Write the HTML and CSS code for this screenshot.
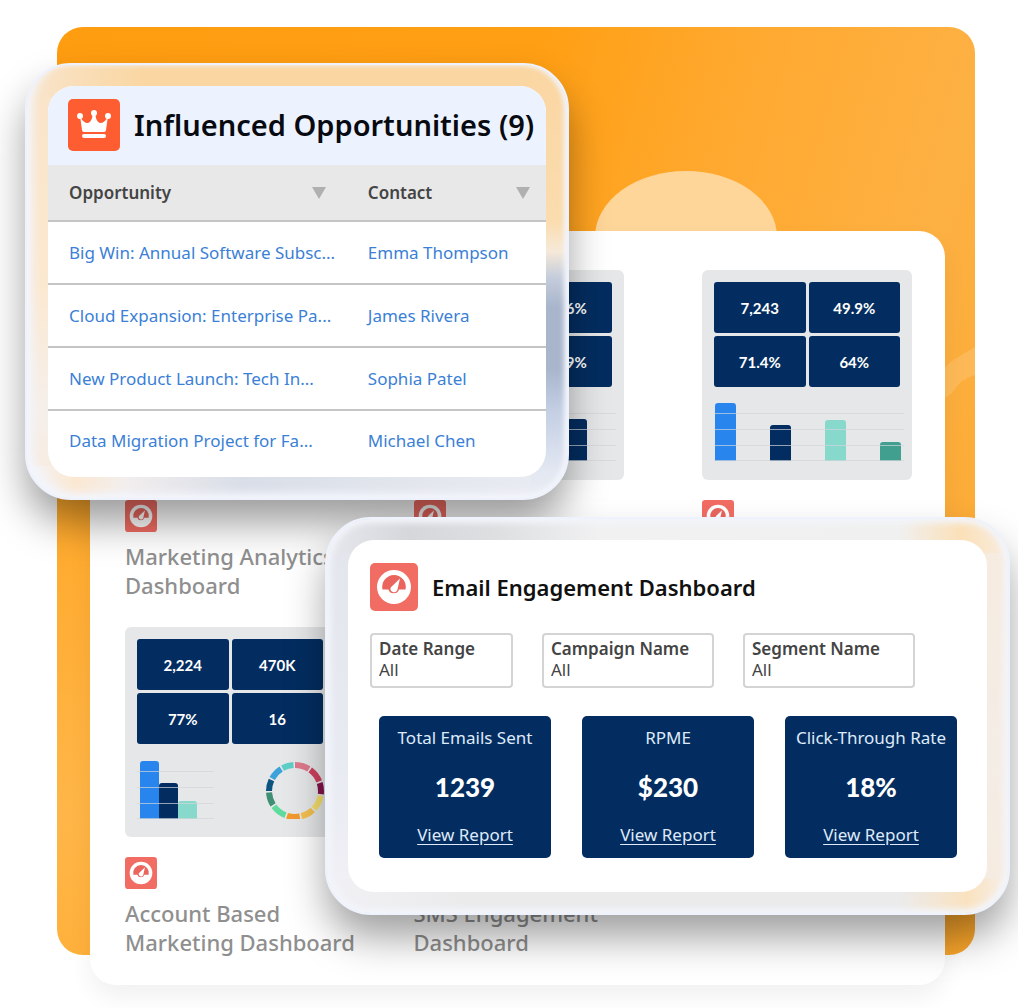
FILE: index.html
```html
<!DOCTYPE html>
<html lang="en">
<head>
  <meta charset="UTF-8">
  <meta name="viewport" content="width=device-width, initial-scale=1.0">
  <title>Marketing Dashboards</title>
  <link rel="stylesheet" href="styles.css">
</head>
<body>
  <!-- shared gauge icon -->
  <svg class="sprite" width="0" height="0" aria-hidden="true">
    <symbol id="gauge" viewBox="0 0 48 48">
      <rect width="48" height="48" rx="5" fill="#f16c63"/>
      <circle cx="24" cy="24" r="17" fill="#fff"/>
      <path d="M12.5 26.5a11.8 11.8 0 1 1 23 0h-6.500a5.500 5.500 0 0 1-10.500 0z" fill="#e9655d"/>
      <path d="M30 15.500L27.300 27.300a3.600 3.600 0 0 1-6.600-2.800z" fill="#fff"/>
    </symbol>
  </svg>

  <main class="stage">
    <div class="backdrop">
      <svg viewBox="0 0 918 928" preserveAspectRatio="none" aria-hidden="true">
        <ellipse cx="629" cy="210" rx="91" ry="66" fill="#ffd699"/>
        <path d="M880 352q8-14 18-20t20-12v28q-14 4-20 14t-18 10z" fill="#fdbb5e" opacity=".8"/>
      </svg>
    </div>

    <section class="board">
      <article class="dash">
        <div class="thumb"></div>
        <svg class="dash-icon"><use href="#gauge"/></svg>
        <h3>Marketing Analytics Dashboard</h3>
      </article>

      <article class="dash">
        <div class="thumb">
          <div class="tiles">
            <span></span><span>12.6%</span>
            <span></span><span>41.9%</span>
          </div>
          <svg class="chart" viewBox="0 0 190 60">
            <path d="M141 59V20q0-3 3-3h14q3 0 3 3v39z" fill="#032d60"/>
            <path d="M0 11.500h190M0 27.500h190M0 43.500h190M0 58.500h190" stroke="#d2d4d8" stroke-opacity=".7"/>
          </svg>
        </div>
        <svg class="dash-icon"><use href="#gauge"/></svg>
      </article>

      <article class="dash">
        <div class="thumb">
          <div class="tiles">
            <span>7,243</span><span>49.9%</span>
            <span>71.4%</span><span>64%</span>
          </div>
          <svg class="chart" viewBox="0 0 190 60">
            <path d="M1 59V4q0-3 3-3h15q3 0 3 3v55z" fill="#2985ee"/>
            <path d="M56 59V26q0-3 3-3h15q3 0 3 3v33z" fill="#032d60"/>
            <path d="M111 59V21q0-3 3-3h15q3 0 3 3v38z" fill="#86d9cb"/>
            <path d="M166 59V43q0-3 3-3h15q3 0 3 3v16z" fill="#419f8f"/>
            <path d="M0 11.500h190M0 27.500h190M0 43.500h190M0 58.500h190" stroke="#d2d4d8" stroke-opacity=".7"/>
          </svg>
        </div>
        <svg class="dash-icon"><use href="#gauge"/></svg>
      </article>

      <article class="dash">
        <div class="thumb">
          <div class="tiles">
            <span>2,224</span><span>470K</span>
            <span>77%</span><span>16</span>
          </div>
          <svg class="chart" viewBox="0 0 190 60">
            <path d="M3 60V5q0-3 3-3h13q3 0 3 3v55z" fill="#2985ee"/>
            <path d="M22 60V27q0-3 3-3h13q3 0 3 3v33z" fill="#032d60"/>
            <path d="M41 60V45q0-3 3-3h13q3 0 3 3v15z" fill="#86d9cb"/>
            <path d="M0 12.500h77M0 28.500h77M0 44.500h77M0 59.500h77" stroke="#d2d4d8" stroke-opacity=".7"/>
            <g fill="none" stroke-width="6" transform="rotate(-90 158 30)">
              <circle cx="156" cy="30" r="26" pathLength="100" stroke="#dd7a8c" stroke-dasharray="9 91"/>
              <circle cx="156" cy="30" r="26" pathLength="100" stroke="#d0405f" stroke-dasharray="9 91" stroke-dashoffset="-10"/>
              <circle cx="156" cy="30" r="26" pathLength="100" stroke="#85134a" stroke-dasharray="7 93" stroke-dashoffset="-20"/>
              <circle cx="156" cy="30" r="26" pathLength="100" stroke="#f7e06b" stroke-dasharray="9 91" stroke-dashoffset="-28"/>
              <circle cx="156" cy="30" r="26" pathLength="100" stroke="#f5c04f" stroke-dasharray="8 92" stroke-dashoffset="-38"/>
              <circle cx="156" cy="30" r="26" pathLength="100" stroke="#f3992f" stroke-dasharray="8 92" stroke-dashoffset="-47"/>
              <circle cx="156" cy="30" r="26" pathLength="100" stroke="#5fdc9d" stroke-dasharray="9 91" stroke-dashoffset="-56"/>
              <circle cx="156" cy="30" r="26" pathLength="100" stroke="#3f8f72" stroke-dasharray="8 92" stroke-dashoffset="-66"/>
              <circle cx="156" cy="30" r="26" pathLength="100" stroke="#0d5380" stroke-dasharray="7 93" stroke-dashoffset="-75"/>
              <circle cx="156" cy="30" r="26" pathLength="100" stroke="#3ba3d9" stroke-dasharray="8 92" stroke-dashoffset="-83"/>
              <circle cx="156" cy="30" r="26" pathLength="100" stroke="#5ccfc6" stroke-dasharray="7 93" stroke-dashoffset="-92"/>
            </g>
          </svg>
        </div>
        <svg class="dash-icon"><use href="#gauge"/></svg>
        <h3>Account Based<br>Marketing Dashboard</h3>
      </article>

      <article class="dash">
        <div class="thumb"></div>
        <h3 class="no-icon">SMS Engagement Dashboard</h3>
      </article>
    </section>

    <section class="glass opportunities">
      <div class="panel">
        <header class="opp-head">
          <svg width="52" height="52" viewBox="0 0 52 52" aria-hidden="true">
            <rect width="52" height="52" rx="5" fill="#fd5d30"/>
            <g fill="#fff">
              <circle cx="12" cy="17" r="3"/>
              <circle cx="26" cy="14" r="3"/>
              <circle cx="40" cy="17" r="3"/>
              <path d="M12 17l1.500 3q4 5.500 7.500 3.500 3.500-2 3.500-9h3q0 7 3.500 9t7.500-3.500l1.500-3-2 14q0 2-2 2H16q-2 0-2-2z"/>
              <rect x="14" y="35" width="24" height="4" rx="2"/>
            </g>
          </svg>
          <h1>Influenced Opportunities (9)</h1>
        </header>
        <table>
          <thead>
            <tr>
              <th scope="col"><div>Opportunity <i class="sort"></i></div></th>
              <th scope="col"><div>Contact <i class="sort"></i></div></th>
            </tr>
          </thead>
          <tbody>
            <tr>
              <td><a href="#">Big Win: Annual Software Subsc...</a></td>
              <td><a href="#">Emma Thompson</a></td>
            </tr>
            <tr>
              <td><a href="#">Cloud Expansion: Enterprise Pa...</a></td>
              <td><a href="#">James Rivera</a></td>
            </tr>
            <tr>
              <td><a href="#">New Product Launch: Tech In...</a></td>
              <td><a href="#">Sophia Patel</a></td>
            </tr>
            <tr>
              <td><a href="#">Data Migration Project for Fa...</a></td>
              <td><a href="#">Michael Chen</a></td>
            </tr>
          </tbody>
        </table>
      </div>
    </section>

    <section class="glass engagement">
      <div class="panel">
        <header class="eng-head">
          <svg width="48" height="48" aria-hidden="true"><use href="#gauge"/></svg>
          <h2>Email Engagement Dashboard</h2>
        </header>
        <form class="filters">
          <div class="filter filter-date">
            <label for="date">Date Range</label>
            <select id="date"><option>All</option></select>
          </div>
          <div class="filter">
            <label for="campaign">Campaign Name</label>
            <select id="campaign"><option>All</option></select>
          </div>
          <div class="filter">
            <label for="segment">Segment Name</label>
            <select id="segment"><option>All</option></select>
          </div>
        </form>
        <div class="metrics">
          <div class="metric">
            <p>Total Emails Sent</p>
            <strong>1239</strong>
            <a href="#">View Report</a>
          </div>
          <div class="metric">
            <p>RPME</p>
            <strong>$230</strong>
            <a href="#">View Report</a>
          </div>
          <div class="metric">
            <p>Click-Through Rate</p>
            <strong>18%</strong>
            <a href="#">View Report</a>
          </div>
        </div>
      </div>
    </section>
  </main>
</body>
</html>
```
FILE: styles.css
```css
* {
  box-sizing: border-box;
}

body {
  margin: 0;
  background: #fff;
  font-family: "Noto Sans", "Open Sans", sans-serif;
  color: #444;
}

h1, h2, h3, p {
  margin: 0;
}

.sprite {
  position: absolute;
}

.stage {
  position: relative;
  padding: 231px 73px 23px 90px;
  overflow: hidden;
}

/* orange background */
.backdrop {
  position: absolute;
  top: 27px;
  bottom: 53px;
  left: 57px;
  right: 43px;
  border-radius: 26px;
  overflow: hidden;
  background:
    radial-gradient(circle at 0 85%, #ffb648 0, rgba(255, 182, 72, 0) 50%),
    linear-gradient(105deg, #ff9d10 0, #ff9f14 42%, #ffa930 60%, #fdb143 80%, #fba62a 100%);
}

.backdrop svg {
  display: block;
  width: 100%;
  height: 100%;
}

/* dashboards list */
.board {
  position: relative;
  display: grid;
  grid-template-columns: repeat(3, 210px);
  justify-content: space-between;
  row-gap: 27px;
  padding: 39px 33px 28px 35px;
  background: #fff;
  border-radius: 26px;
  box-shadow: 0 12px 24px rgba(0, 0, 0, 0.06);
}

.dash {
  display: flex;
  flex-direction: column;
  align-items: flex-start;
}

.thumb {
  width: 210px;
  height: 210px;
  padding: 12px;
  background: #e6e7e8;
  border-radius: 6px;
}

.tiles {
  display: grid;
  grid-template-columns: 1fr 1fr;
  grid-auto-rows: 51px;
  gap: 3px;
}

.tiles span {
  display: flex;
  align-items: center;
  justify-content: center;
  background: #032d60;
  border-radius: 3px;
  color: #fff;
  font-family: Lato, sans-serif;
  font-size: 15px;
  font-weight: 700;
}

.chart {
  display: block;
  width: 190px;
  height: 60px;
  margin-top: 15px;
}

.dash-icon {
  width: 32px;
  height: 32px;
  margin: 20px 0 10px;
}

.dash h3 {
  width: 240px;
  font-size: 22px;
  line-height: 29px;
  font-weight: 500;
  color: #8f8f8f;
}

.dash .no-icon {
  margin-top: 62px;
}

/* floating windows, the frame is tinted by strips of gradient */
.glass {
  position: absolute;
  padding: 21px;
  border: 2px solid #eef2fc;
  border-radius: 46px;
  background-repeat: no-repeat;
}

.panel {
  background: #fff;
  border-radius: 26px;
  overflow: hidden;
}

.opportunities {
  top: 63px;
  left: 25px;
  width: 544px;
  background-color: #f4f4f8;
  background-image:
    linear-gradient(180deg, #fad6a2 0, #fbdcae 36%, #f6e9d8 43%, #c5cddc 49%, #a8b5cb 56%, #a8b5cb 70%, #c4cfe4 80%, #e3e8f2 94%, rgba(240, 242, 247, 0) 100%),
    linear-gradient(90deg, #f8e6d0 0, #f9dfbb 8%, #fad6a2 22%, #fad6a2 100%),
    linear-gradient(90deg, #f3f4fa 0, #fbe8d2 9%, #f2eeed 18%, #d9dee8 40%, #e4e7ed 75%, #e9ecf2 100%),
    linear-gradient(180deg, #f9e4c8 0, #fbe8d0 50%, #f5efeb 80%, #f8eadb 100%);
  background-size: 36px 100%, 100% 32px, 100% 32px, 32px 100%;
  background-position: right top, left top, left bottom, left top;
  box-shadow:
    inset 6px -5px 8px #f3f5fc,
    inset -3px 0 5px #f3f5fc,
    0 24px 40px -2px rgba(0, 0, 0, 0.4);
}

.opp-head {
  display: flex;
  align-items: center;
  gap: 14px;
  height: 79px;
  padding: 0 0 2px 20px;
  background: #edf3fe;
}

.opp-head svg {
  flex: none;
}

.opp-head h1 {
  font-size: 29px;
  font-weight: 600;
  color: #080a12;
  white-space: nowrap;
}

table {
  width: 100%;
  margin-bottom: 7px;
  border-collapse: collapse;
  table-layout: fixed;
}

th,
td {
  padding: 0 16px 0 21px;
  text-align: left;
  font-size: 17px;
  border-bottom: 2px solid #c4c6c6;
  white-space: nowrap;
}

th:first-child {
  width: 60%;
}

th {
  height: 56px;
  background: #e8e8e8;
  font-weight: 600;
}

th:first-child {
  padding-right: 21px;
}

th div {
  display: flex;
  align-items: center;
  justify-content: space-between;
}

.sort {
  border: 7px solid transparent;
  border-top: 12px solid #b0b0b0;
  border-bottom: 0;
}

td {
  height: 63px;
}

tr:last-child td {
  height: 60px;
  border-bottom: 0;
}

td a {
  color: #3b7fd6;
  text-decoration: none;
}

.engagement {
  top: 517px;
  left: 325px;
  right: 8px;
  background-color: #f1f1f4;
  background-image:
    linear-gradient(90deg, #e6e8ee 0, #d5d7db 12%, #dddfe1 25%, #f1f1f2 40%, #f0f0f0 84%, #fbe0b8 93%, #f8ecdf 100%),
    linear-gradient(90deg, #f1f1f5 0, #ebebec 20%, #ebebec 84%, #fae2c0 94%, #f6efe8 100%),
    linear-gradient(180deg, #f6ebdf 0, #f4ede6 60%, #f6ebdf 100%),
    linear-gradient(180deg, #e3e5ec 0, #e8eaf2 60%, #f2f2f6 100%);
  background-size: 100% 34px, 100% 34px, 34px 100%, 34px 100%;
  background-position: left top, left bottom, right top, left top;
  box-shadow:
    inset 0 0 6px 4px #f3f5fb,
    0 24px 40px -2px rgba(0, 0, 0, 0.38);
}

.engagement .panel {
  padding: 23px 30px 34px 22px;
}

.eng-head {
  display: flex;
  align-items: center;
  gap: 14px;
}

.eng-head h2 {
  font-size: 22px;
  font-weight: 600;
  color: #111;
  white-space: nowrap;
}

.filters {
  display: flex;
  gap: 29px;
  margin-top: 22px;
}

.filter {
  display: flex;
  flex-direction: column;
  width: 172px;
  height: 55px;
  padding: 3px 7px;
  border: 2px solid #d4d4d4;
  border-radius: 4px;
}

.filter-date {
  width: 143px;
}

.filter label {
  font-size: 17px;
  line-height: 22px;
  font-weight: 600;
}

.filter select {
  appearance: none;
  width: 100%;
  padding: 0;
  border: 0;
  background: none;
  font-family: inherit;
  font-size: 17px;
  line-height: 20px;
  color: #444;
}

.metrics {
  display: flex;
  gap: 31px;
  margin-top: 28px;
  padding-left: 9px;
}

.metric {
  flex: 1;
  display: flex;
  flex-direction: column;
  align-items: center;
  justify-content: space-between;
  height: 142px;
  padding: 10px 0 11px;
  background: #032d60;
  border-radius: 5px;
  color: #fff;
}

.metric p,
.metric a {
  font-size: 17px;
  line-height: 24px;
  color: #dfeafa;
  white-space: nowrap;
}

.metric a {
  text-underline-offset: 3px;
}

.metric strong {
  font-family: Lato, sans-serif;
  font-size: 26px;
  font-weight: 900;
  line-height: 28px;
}
```
